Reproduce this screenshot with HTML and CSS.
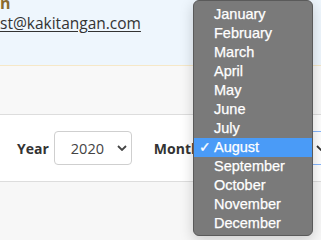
FILE: index.html
```html
<!DOCTYPE html>
<html>
<head>
<meta charset="utf-8">
<link rel="stylesheet" href="styles.css">
</head>
<body>
<div class="page">
  <section class="profile">
    <div class="name">n</div>
    <div class="contacts">
      <a class="email">st@kakitangan.com</a>
      <a class="email other">ok</a>
    </div>
  </section>
  <section class="strip"></section>
  <section class="filters">
    <label class="lbl">Year</label>
    <div class="select year"><span>2020</span><svg class="chev" viewBox="0 0 10 6" width="10" height="6"><path d="M1 1l4 4 4-4" fill="none" stroke="#444" stroke-width="1.8"/></svg></div>
    <label class="lbl month-lbl">Month</label>
    <div class="select month focus"><span>August</span><svg class="chev" viewBox="0 0 10 6" width="10" height="6"><path d="M1 1l4 4 4-4" fill="none" stroke="#333" stroke-width="1.8"/></svg></div>
  </section>
  <section class="footer"></section>

  <ul class="menu">
    <li>January</li>
    <li>February</li>
    <li>March</li>
    <li>April</li>
    <li>May</li>
    <li>June</li>
    <li>July</li>
    <li class="sel"><span class="check">✓</span>August</li>
    <li>September</li>
    <li>October</li>
    <li>November</li>
    <li>December</li>
  </ul>
</div>
</body>
</html>
```
FILE: styles.css
```css
html, body {
  margin: 0;
  padding: 0;
  background: #f7f7f7;
  overflow: hidden;
}
.page {
  position: relative;
  width: 321px;
  height: 240px;
  overflow: hidden;
  font-family: "Open Sans", "Liberation Sans", sans-serif;
}
.profile {
  display: flow-root;
  background: #eef6fd;
  border-bottom: 1px solid #f6e8c8;
  box-sizing: border-box;
  height: 66px;
}
.name {
  font-family: "Open Sans", sans-serif;
  font-weight: 700;
  font-size: 16px;
  line-height: 16px;
  color: #8a6a2e;
  margin-top: -5px;
}
.contacts {
  display: flex;
  margin-top: 2px;
  font-size: 15.5px;
  line-height: 20px;
}
.email {
  color: #333;
  text-decoration: underline;
  text-underline-offset: 2px;
}
.email.other {
  margin-left: 190px;
}
.strip {
  height: 48px;
  background: #f8f8f8;
  border-bottom: 1px solid #dddddd;
}
.filters {
  box-sizing: border-box;
  height: 67px;
  background: #fff;
  border-bottom: 1px solid #dddddd;
  display: flex;
  align-items: center;
  padding-left: 17px;
}
.lbl {
  font-weight: 700;
  font-size: 14px;
  color: #333;
}
.select {
  box-sizing: border-box;
  height: 34px;
  border: 1px solid #cfcfcf;
  border-radius: 4px;
  display: flex;
  align-items: center;
  justify-content: space-between;
  font-size: 14.5px;
  color: #444;
  background: #fff;
  flex-shrink: 0;
}
.select.year {
  width: 78px;
  margin-left: 5px;
  padding: 0 4px 0 16px;
}
.month-lbl {
  margin-left: 22px;
}
.select.month {
  width: 125px;
  margin-left: 5px;
  padding: 0 3px 0 17px;
  border-color: #86b7fe;
}
.footer {
  height: 60px;
  background: #f7f7f7;
}
.menu {
  position: absolute;
  left: 193px;
  top: 0;
  width: 120px;
  height: 236px;
  margin: 0;
  padding: 4px 0;
  box-sizing: border-box;
  list-style: none;
  background: #7a7a7a;
  border: 1px solid #5a5a5a;
  border-radius: 6px;
  box-shadow: 0 4px 14px rgba(0,0,0,0.18);
  font-family: "Liberation Sans", Arial, sans-serif;
  font-size: 14.5px;
  color: #fff;
}
.menu li {
  position: relative;
  height: 19px;
  line-height: 19px;
  padding-left: 20px;
  -webkit-text-stroke: 0.25px #fff;
}
.menu li.sel {
  background: #4a9bf7;
}
.check {
  position: absolute;
  left: 5px;
  top: 0;
  font-size: 14px;
}
```
